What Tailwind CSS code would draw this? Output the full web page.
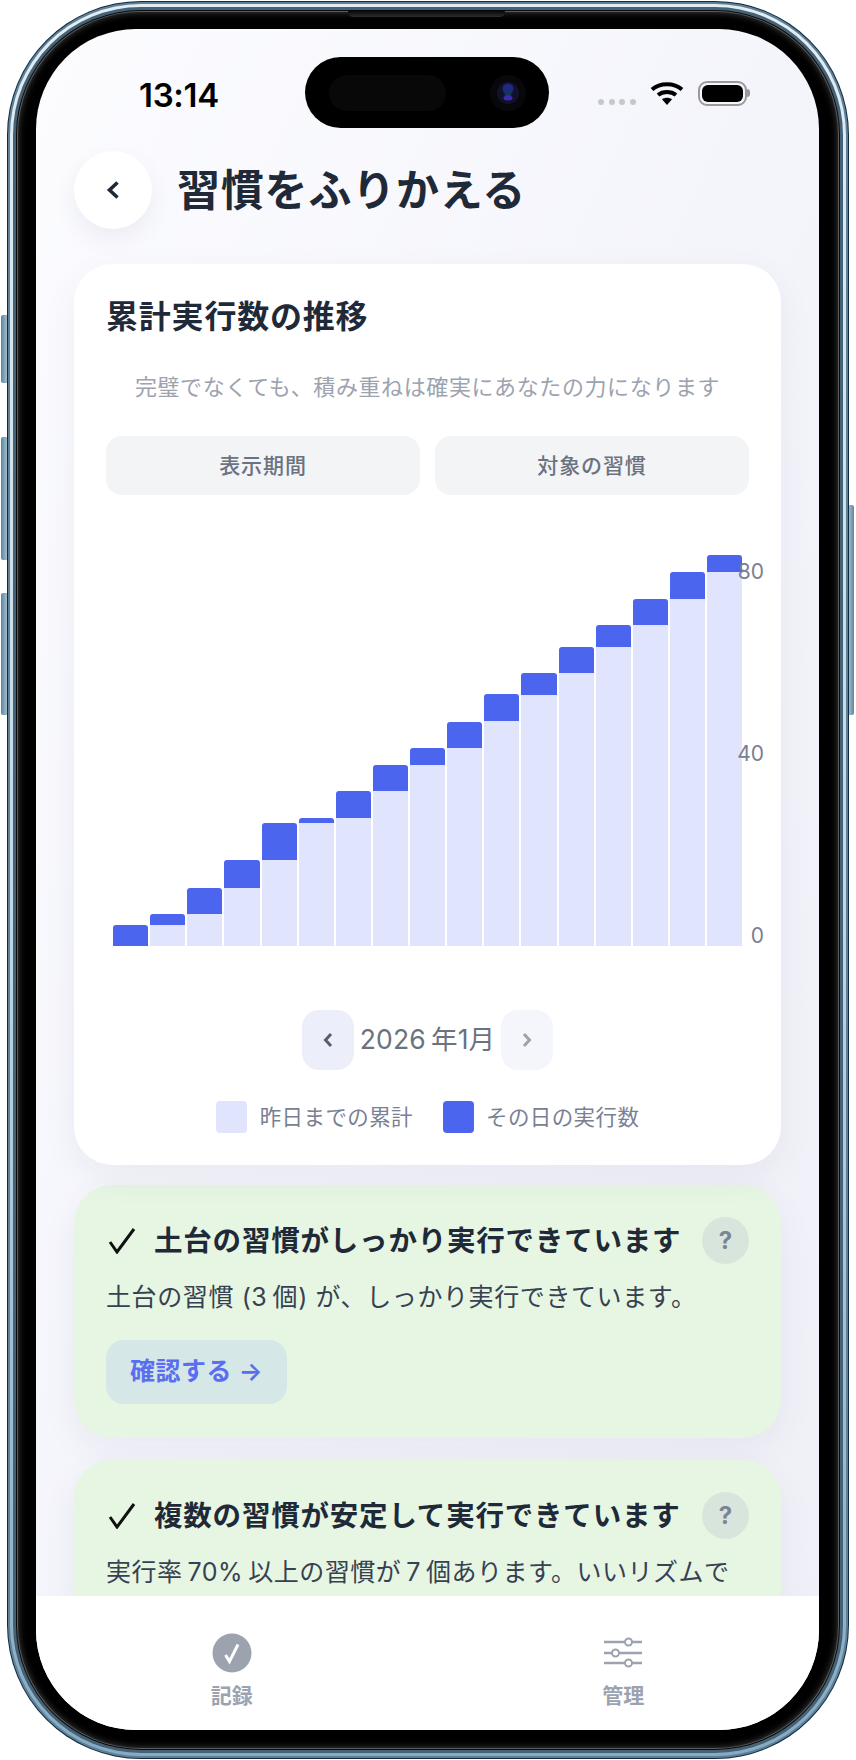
<!DOCTYPE html>
<html lang="ja">
<head>
    <meta charset="UTF-8">
    <meta name="viewport" content="width=device-width, initial-scale=1.0">
    <title>習慣をふりかえる</title>
    <script src="https://cdn.jsdelivr.net/npm/@tailwindcss/browser@4"></script>
</head>
<body class="bg-white w-[856px] h-[1760px] overflow-hidden font-['Inter','Noto_Sans_CJK_JP',sans-serif]">
    <div class="relative w-[856px] h-[1760px]">
        <!-- Side buttons -->
        <div class="absolute left-[1px] top-[315px] w-[8px] h-[68px] rounded-l-[2px] bg-gradient-to-r from-[#5f86a0] to-[#b9d2e0]"></div>
        <div class="absolute left-[1px] top-[437px] w-[8px] h-[123px] rounded-l-[2px] bg-gradient-to-r from-[#5f86a0] to-[#b9d2e0]"></div>
        <div class="absolute left-[1px] top-[593px] w-[8px] h-[122px] rounded-l-[2px] bg-gradient-to-r from-[#5f86a0] to-[#b9d2e0]"></div>
        <div class="absolute left-[847px] top-[505px] w-[7px] h-[210px] rounded-r-[2px] bg-gradient-to-r from-[#b9d2e0] to-[#5f86a0]"></div>

        <!-- Phone frame -->
        <div class="absolute left-[7px] top-[1px] w-[842px] h-[1758px] rounded-[134px] bg-[#0f2a42] p-[1px]">
            <div class="w-full h-full rounded-[133px] bg-[#5f8096] p-[2px]">
                <div class="w-full h-full rounded-[131px] bg-gradient-to-b from-[#e2edf3] via-[#c3d8e4] to-[#86abc2] p-[3px]">
                    <div class="w-full h-full rounded-[128px] bg-[#446176] p-[3px]">
                        <div class="w-full h-full rounded-[125px] bg-[#0c0c0c] p-[1px]">
                            <div class="w-full h-full rounded-[124px] bg-[#5a5c5e] p-[1px]">
                                <div class="relative w-full h-full rounded-[123px] bg-black shadow-[inset_0_0_7px_rgba(150,150,150,0.45)] pl-[18px] pr-[19px] pt-[17px] pb-[18px]">
                                    <div class="absolute left-[330px] -top-[2px] w-[157px] h-[7px] rounded-b-[5px] bg-gradient-to-b from-[#050505] to-[#2c2e30]"></div>

                                    <!-- Screen -->
                                    <div class="relative w-[783px] h-[1701px] rounded-[100px] overflow-hidden flex flex-col bg-gradient-to-br from-[#fcfcff] via-[#f4f5fb] to-[#eff0f7]">
                                        <!-- Dynamic island -->
                                        <div class="absolute left-[269px] top-[28px] w-[244px] h-[71px] rounded-[36px] bg-black flex items-center justify-between pl-[24px] pr-[23px]">
                                            <div class="w-[117px] h-[36px] rounded-[18px] bg-[#080808]"></div>
                                            <svg width="36" height="36" viewBox="0 0 36 36">
                                                <circle cx="18" cy="18" r="18" fill="#08080c"/>
                                                <circle cx="18" cy="18" r="11" fill="#10122c"/>
                                                <circle cx="18" cy="14" r="5.5" fill="#1f2a7c"/>
                                                <ellipse cx="18" cy="23" rx="4.5" ry="2.5" fill="#3a2bb0"/>
                                                <ellipse cx="18" cy="20" rx="3.5" ry="1" fill="#0f4a3a"/>
                                            </svg>
                                        </div>

                                        <main class="flex-1 min-h-0 overflow-hidden">
                                            <!-- Status bar -->
                                            <div class="relative h-[122px]">
                                                <div class="absolute left-[103px] top-[46px] text-[33px] leading-[40px] font-semibold text-black tracking-[-0.3px]">13:14</div>
                                                <div class="absolute left-[562px] top-[70px] flex gap-[4.5px]">
                                                    <div class="w-[6px] h-[6px] rounded-full bg-[#c6c7ca]"></div>
                                                    <div class="w-[6px] h-[6px] rounded-full bg-[#c6c7ca]"></div>
                                                    <div class="w-[6px] h-[6px] rounded-full bg-[#c6c7ca]"></div>
                                                    <div class="w-[6px] h-[6px] rounded-full bg-[#c6c7ca]"></div>
                                                </div>
                                                <svg class="absolute left-[614px] top-[52px]" width="34" height="24" viewBox="0 0 34 24">
                                                    <path d="M2 8.5 C10 1.5 24 1.5 32 8.5" fill="none" stroke="#000" stroke-width="4"/>
                                                    <path d="M8 14 C13 10 21 10 26 14" fill="none" stroke="#000" stroke-width="4"/>
                                                    <path d="M12 18.2 C15 16.2 19 16.2 22 18.2 L17 24 Z" fill="#000"/>
                                                </svg>
                                                <div class="absolute left-[662px] top-[52px] w-[49px] h-[25px] rounded-[9px] border-[2px] border-[#9a9a9c] p-[2px]">
                                                    <div class="w-full h-full rounded-[6px] bg-black"></div>
                                                </div>
                                                <div class="absolute left-[711px] top-[60px] w-[3px] h-[8px] rounded-r-[3px] bg-[#9a9a9c]"></div>
                                            </div>

                                            <!-- Header -->
                                            <div class="flex items-center gap-[25px] ml-[38px] h-[78px]">
                                                <button class="w-[78px] h-[78px] rounded-full bg-white shadow-[0_10px_24px_rgba(30,40,80,0.07)] flex items-center justify-center">
                                                    <svg width="14" height="18" viewBox="0 0 14 18"><path d="M11.5 1.5 L3.5 9 L11.5 16.5" fill="none" stroke="#1f2937" stroke-width="3.6"/></svg>
                                                </button>
                                                <h1 class="text-[43px] leading-[50px] font-bold text-[#1f2937] tracking-[0.8px]">習慣をふりかえる</h1>
                                            </div>

                                            <!-- Chart card -->
                                            <section class="relative mt-[35px] mx-[38px] w-[707px] h-[901px] rounded-[38px] bg-white shadow-[0_12px_36px_rgba(30,40,80,0.06)] px-[32px] pt-[31px]">
                                                <h2 class="text-[32px] leading-[44px] font-bold text-[#1f2937] tracking-[0.8px]">累計実行数の推移</h2>
                                                <p class="mt-[33px] h-[30px] text-[22px] leading-[30px] text-[#9ca3af] text-center tracking-[0.6px] whitespace-nowrap">完璧でなくても、積み重ねは確実にあなたの力になります</p>

                                                <div class="mt-[34px] grid grid-cols-2 gap-[15px]">
                                                    <button class="h-[59px] rounded-[16px] bg-[#f3f4f6] text-[21px] font-medium text-[#6b7280] tracking-[0.9px]">表示期間</button>
                                                    <button class="h-[59px] rounded-[16px] bg-[#f3f4f6] text-[21px] font-medium text-[#6b7280] tracking-[0.9px]">対象の習慣</button>
                                                </div>

                                                <!-- Bars -->
                                                <div class="relative mt-[28px] h-[423px] -mx-[32px] pl-[39px]">
                                                    <div id="bars" class="flex items-end gap-[2px] h-full w-[629px]"></div>
                                                    <span class="absolute right-[17px] top-[35px] text-[21px] leading-[28px] text-[#7a8094]">80</span>
                                                    <span class="absolute right-[17px] top-[217px] text-[21px] leading-[28px] text-[#7a8094]">40</span>
                                                    <span class="absolute right-[17px] top-[399px] text-[21px] leading-[28px] text-[#7a8094]">0</span>
                                                </div>

                                                <!-- Month nav -->
                                                <div class="mt-[64px] flex items-center justify-center gap-[5px] h-[60px]">
                                                    <button class="w-[52px] h-[60px] rounded-[17px] bg-[#eceffa] flex items-center justify-center">
                                                        <svg width="12" height="16" viewBox="0 0 12 16"><path d="M9 2 L3.5 8 L9 14" fill="none" stroke="#565e70" stroke-width="3"/></svg>
                                                    </button>
                                                    <span class="w-[137px] text-center text-[26.5px] text-[#6b7280] tracking-[0.2px] whitespace-nowrap">2026&#8201;年1月</span>
                                                    <button class="w-[52px] h-[60px] rounded-[17px] bg-[#f5f6fb] flex items-center justify-center">
                                                        <svg width="12" height="16" viewBox="0 0 12 16"><path d="M3 2 L8.5 8 L3 14" fill="none" stroke="#9ca3af" stroke-width="3"/></svg>
                                                    </button>
                                                </div>

                                                <!-- Legend -->
                                                <div class="mt-[31px] flex items-center justify-center h-[32px]">
                                                    <div class="w-[31px] h-[32px] rounded-[4px] bg-[#e0e5fd]"></div>
                                                    <span class="ml-[13px] text-[21.5px] text-[#7a8094] tracking-[0.4px] whitespace-nowrap">昨日までの累計</span>
                                                    <div class="ml-[30px] w-[31px] h-[32px] rounded-[4px] bg-[#4c65ee]"></div>
                                                    <span class="ml-[12px] text-[21.5px] text-[#7a8094] tracking-[0.4px] whitespace-nowrap">その日の実行数</span>
                                                </div>
                                            </section>

                                            <!-- Insight 1 -->
                                            <section class="mt-[20px] mx-[38px] w-[707px] h-[253px] rounded-[38px] bg-[#e6f6e3] shadow-[0_12px_36px_rgba(30,40,80,0.06)] px-[32px] pt-[32px]">
                                                <div class="flex items-center h-[47px]">
                                                    <svg class="ml-[2px] shrink-0" width="28" height="27" viewBox="0 0 28 27"><path d="M2 15 L9 25 L26 2" fill="none" stroke="#111" stroke-width="3"/></svg>
                                                    <h3 class="ml-[18px] flex-1 text-[28.5px] leading-[47px] font-bold text-[#1f2937] tracking-[0.8px] whitespace-nowrap">土台の習慣がしっかり実行できています</h3>
                                                    <div class="w-[47px] h-[47px] rounded-full bg-[#d8e5dc] flex items-center justify-center text-[24px] font-bold text-[#7b8494]">?</div>
                                                </div>
                                                <p class="mt-[15px] h-[36px] text-[25px] leading-[36px] text-[#374151] tracking-[0.6px] whitespace-nowrap">土台の習慣 (3&#8201;個) が、しっかり実行できています。</p>
                                                <button class="mt-[25px] w-[181px] h-[64px] rounded-[18px] bg-[#d5e7e6] text-[25px] font-semibold text-[#5b6ef0] tracking-[0.5px]">確認する →</button>
                                            </section>

                                            <!-- Insight 2 -->
                                            <section class="mt-[22px] mx-[38px] w-[707px] h-[253px] rounded-[38px] bg-[#e6f6e3] shadow-[0_12px_36px_rgba(30,40,80,0.06)] px-[32px] pt-[32px]">
                                                <div class="flex items-center h-[47px]">
                                                    <svg class="ml-[2px] shrink-0" width="28" height="27" viewBox="0 0 28 27"><path d="M2 15 L9 25 L26 2" fill="none" stroke="#111" stroke-width="3"/></svg>
                                                    <h3 class="ml-[18px] flex-1 text-[28.5px] leading-[47px] font-bold text-[#1f2937] tracking-[0.8px] whitespace-nowrap">複数の習慣が安定して実行できています</h3>
                                                    <div class="w-[47px] h-[47px] rounded-full bg-[#d8e5dc] flex items-center justify-center text-[24px] font-bold text-[#7b8494]">?</div>
                                                </div>
                                                <p class="mt-[15px] h-[36px] text-[25px] leading-[36px] text-[#374151] tracking-[0.5px] whitespace-nowrap">実行率&#8201;70%&#8201;以上の習慣が&#8201;7&#8201;個あります。いいリズムで</p>
                                            </section>
                                        </main>

                                        <!-- Bottom nav -->
                                        <nav class="h-[134px] shrink-0 bg-white grid grid-cols-2 pt-[37px]">
                                            <div class="flex flex-col items-center">
                                                <svg width="40" height="40" viewBox="0 0 40 40">
                                                    <circle cx="20" cy="20" r="19.5" fill="#9ca3af"/>
                                                    <path d="M13.5 22 L17.5 28.5 L26 11.5" fill="none" stroke="#fff" stroke-width="3"/>
                                                </svg>
                                                <span class="mt-[8px] text-[21px] leading-[30px] font-semibold text-[#9ca3af]">記録</span>
                                            </div>
                                            <div class="flex flex-col items-center">
                                                <svg width="40" height="40" viewBox="0 0 40 40">
                                                    <path d="M1 9 H22 M29 9 H39 M1 20 H9 M16 20 H39 M1 30 H22 M29 30 H39" stroke="#9ca3af" stroke-width="2.5"/>
                                                    <circle cx="25.5" cy="9" r="3.5" fill="none" stroke="#9ca3af" stroke-width="2"/>
                                                    <circle cx="12.5" cy="20" r="3.5" fill="none" stroke="#9ca3af" stroke-width="2"/>
                                                    <circle cx="25.5" cy="30" r="3.5" fill="none" stroke="#9ca3af" stroke-width="2"/>
                                                </svg>
                                                <span class="mt-[8px] text-[21px] leading-[30px] font-semibold text-[#9ca3af]">管理</span>
                                            </div>
                                        </nav>
                                    </div>
                                </div>
                            </div>
                        </div>
                    </div>
                </div>
            </div>
        </div>
    </div>

    <script>
        // [yesterday total, today] in px
        const data = [[0, 21.3], [21.3, 10.3], [31.7, 26.7], [58.3, 27.7], [86, 37], [123, 5], [128, 27], [155, 26.3], [181.3, 16.7], [198, 26.3], [224.7, 27], [251.3, 21.3], [272.7, 26.7], [299.3, 21.7], [321, 26.3], [347.3, 27], [374.3, 16.3]];
        document.querySelector('#bars').innerHTML = data.map(([base, today]) => `
            <div class="flex-1 flex flex-col">
                <div class="bg-[#4c65ee] rounded-t-[3px]" style="height:${today}px"></div>
                <div class="bg-[#e0e5fd]" style="height:${base}px"></div>
            </div>
        `).join('');
    </script>
</body>
</html>
